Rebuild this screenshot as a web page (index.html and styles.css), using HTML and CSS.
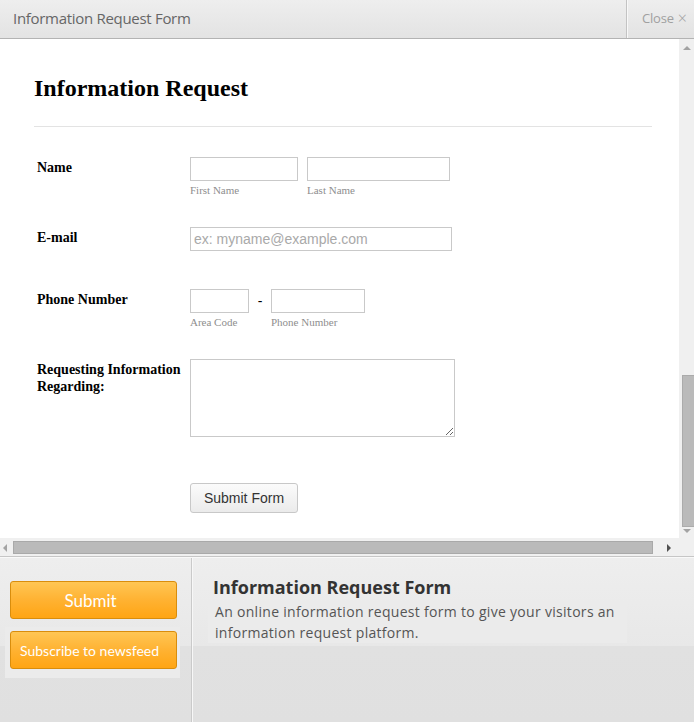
FILE: index.html
```html
<!DOCTYPE html>
<html lang="en">
<head>
<meta charset="utf-8">
<title>Information Request Form</title>
<link rel="stylesheet" href="styles.css">
</head>
<body>
<div class="window">
  <header class="topbar">
    <div class="topbar-title">Information Request Form</div>
    <div class="topbar-close">Close <span class="close-x">×</span></div>
  </header>

  <div class="frame">
    <div class="viewport">
      <div class="content">
        <h1 class="form-heading">Information Request</h1>
        <hr class="divider">
        <form class="form">
          <div class="row">
            <label class="row-label">Name</label>
            <div class="fields">
              <div class="sub">
                <input class="input w-first" type="text">
                <span class="sublabel">First Name</span>
              </div>
              <div class="sub">
                <input class="input w-last" type="text">
                <span class="sublabel">Last Name</span>
              </div>
            </div>
          </div>

          <div class="row row-email">
            <label class="row-label">E-mail</label>
            <div class="fields">
              <input class="input w-email" type="text" placeholder="ex: myname@example.com">
            </div>
          </div>

          <div class="row">
            <label class="row-label">Phone Number</label>
            <div class="fields fields-phone">
              <div class="sub">
                <input class="input w-area" type="text">
                <span class="sublabel">Area Code</span>
              </div>
              <span class="dash">-</span>
              <div class="sub">
                <input class="input w-phone" type="text">
                <span class="sublabel">Phone Number</span>
              </div>
            </div>
          </div>

          <div class="row">
            <label class="row-label">Requesting Information Regarding:</label>
            <div class="fields">
              <textarea class="textarea"></textarea>
            </div>
          </div>

          <div class="row row-submit">
            <span class="row-label"></span>
            <div class="fields">
              <button type="button" class="btn-form">Submit Form</button>
            </div>
          </div>
        </form>
      </div>

      <div class="vscroll">
        <div class="vbox vbox-up"><span class="tri tri-up"></span></div>
        <div class="vtrack"><div class="vthumb"></div></div>
        <div class="vbox vbox-down"><span class="tri tri-down"></span></div>
      </div>
    </div>

    <div class="hscroll">
      <div class="hbox hbox-left"><span class="tri tri-left"></span></div>
      <div class="hthumb"></div>
      <div class="hbox hbox-right"><span class="tri tri-right"></span></div>
    </div>
  </div>

  <footer class="panel">
    <div class="panel-left">
      <button type="button" class="btn-orange btn-submit">Submit</button>
      <div class="subscribe-wrap">
        <button type="button" class="btn-orange btn-subscribe">Subscribe to newsfeed</button>
      </div>
    </div>
    <div class="panel-right">
      <h2 class="panel-title">Information Request Form</h2>
      <p class="panel-desc">An online information request form to give your visitors an information request platform.</p>
    </div>
  </footer>
</div>
</body>
</html>
```

FILE: styles.css
```css
* { box-sizing: border-box; }

html, body {
  margin: 0;
  padding: 0;
  background: #e0e0e0;
}

.window {
  width: 694px;
  height: 722px;
  display: flex;
  flex-direction: column;
  overflow: hidden;
}

/* ---------- Top bar ---------- */
.topbar {
  height: 39px;
  flex: none;
  display: flex;
  align-items: stretch;
  background: linear-gradient(#eeeeee, #e3e3e3);
  border-bottom: 1px solid #b3b3b3;
}

.topbar-title {
  flex: 1;
  display: flex;
  align-items: center;
  padding: 0 0 3px 13px;
  font-family: "Open Sans", "Liberation Sans", sans-serif;
  font-size: 15px;
  color: #666666;
  letter-spacing: -0.3px;
}

.topbar-close {
  width: 68px;
  display: flex;
  align-items: center;
  padding: 0 0 2px 15px;
  border-left: 1px solid #c3c3c3;
  box-shadow: inset 1px 0 0 #f8f8f8;
  font-family: "Open Sans", "Liberation Sans", sans-serif;
  font-size: 13px;
  color: #a0a0a0;
  letter-spacing: -0.2px;
}

.close-x {
  margin-left: 4px;
  font-size: 16px;
  font-weight: 300;
  line-height: 1;
}

/* ---------- Frame ---------- */
.frame {
  flex: none;
  display: flex;
  flex-direction: column;
}

.viewport {
  height: 499px;
  display: flex;
}

.content {
  flex: 1;
  background: #ffffff;
  padding: 35px 0 0 34px;
  font-family: "Liberation Serif", "Times New Roman", serif;
}

.form-heading {
  margin: 0;
  font-size: 24px;
  line-height: 28px;
  font-weight: bold;
  color: #000;
}

.divider {
  margin: 24px 0 0 0;
  width: 618px;
  border: 0;
  border-top: 1px solid #e3e3e3;
  height: 0;
}

.form {
  margin: 30px 0 0 0;
  padding-left: 3px;
  display: flex;
  flex-direction: column;
  gap: 30px;
}

.row {
  display: grid;
  grid-template-columns: 153px auto;
  align-items: start;
}

.row-email { margin-bottom: 8px; }
.row-submit { margin-top: 16px; }

.row-label {
  padding-top: 2px;
  font-size: 14px;
  line-height: 17px;
  font-weight: bold;
  color: #000;
}

.fields {
  display: flex;
  align-items: flex-start;
  gap: 9px;
}

.fields-phone { gap: 0; }

.sub {
  display: flex;
  flex-direction: column;
}

.input {
  height: 24px;
  margin: 0;
  border: 1px solid #c9c9c9;
  padding: 0 3px;
  font-family: "Liberation Sans", Arial, sans-serif;
  font-size: 14px;
  color: #333;
  background: #fff;
  outline: none;
}

.input::placeholder { color: #a9a9a9; }

.w-first { width: 108px; }
.w-last { width: 143px; }
.w-email { width: 262px; }
.w-area { width: 59px; }
.w-phone { width: 94px; }

.sublabel {
  margin-top: 2px;
  font-size: 11px;
  line-height: 14px;
  color: #8e8e8e;
}

.dash {
  width: 22px;
  text-align: center;
  font-family: "Liberation Sans", Arial, sans-serif;
  font-size: 14px;
  line-height: 24px;
  color: #000;
}

.textarea {
  width: 265px;
  height: 78px;
  margin: 0;
  border: 1px solid #c9c9c9;
  padding: 2px;
  font-family: "Liberation Sans", Arial, sans-serif;
  font-size: 13px;
  outline: none;
}

.btn-form {
  width: 108px;
  height: 30px;
  margin: 0;
  padding: 0;
  border: 1px solid #c8c8c8;
  border-radius: 3px;
  background: linear-gradient(#fbfbfb, #ebebeb);
  font-family: "Liberation Sans", Arial, sans-serif;
  font-size: 14px;
  color: #333;
}

/* ---------- Vertical scrollbar ---------- */
.vscroll {
  width: 15px;
  flex: none;
  display: flex;
  flex-direction: column;
  background: #f0f0f0;
}

.vbox {
  flex: none;
  display: flex;
  justify-content: center;
}

.vbox-up { height: 16px; padding-top: 7px; }
.vbox-down { height: 11px; padding-top: 2px; }

.vtrack {
  flex: 1;
  display: flex;
  flex-direction: column;
  justify-content: flex-end;
}

.vthumb {
  height: 152px;
  margin-left: 3px;
  width: 12px;
  background: #bababa;
  border: 1px solid #ababab;
  border-right: 0;
}

.tri {
  display: block;
  width: 0;
  height: 0;
}

.tri-up {
  border-left: 4px solid transparent;
  border-right: 4px solid transparent;
  border-bottom: 4px solid #a3a3a3;
}

.tri-down {
  border-left: 4px solid transparent;
  border-right: 4px solid transparent;
  border-top: 4px solid #a3a3a3;
}

.tri-left {
  border-top: 4px solid transparent;
  border-bottom: 4px solid transparent;
  border-right: 4px solid #a3a3a3;
}

.tri-right {
  border-top: 4px solid transparent;
  border-bottom: 4px solid transparent;
  border-left: 4px solid #505050;
}

/* ---------- Horizontal scrollbar ---------- */
.hscroll {
  height: 19px;
  display: flex;
  align-items: flex-start;
  background: #f0f0f0;
  border-bottom: 1px solid #c6c6c6;
}

.hbox {
  flex: none;
  padding-top: 6px;
}

.hbox-left { width: 13px; padding-left: 3px; }
.hbox-right { margin-left: 14px; }

.hthumb {
  width: 640px;
  height: 13px;
  margin-top: 3px;
  background: #bababa;
  border: 1px solid #a9a9a9;
}

/* ---------- Bottom panel ---------- */
.panel {
  flex: 1;
  display: grid;
  grid-template-columns: 192px 1fr;
  border-top: 1px solid #f9f9f9;
  background: linear-gradient(#eeeeee 0, #e8e8e8 88px, #e1e1e1 88px, #e0e0e0 100%);
}

.panel-left {
  border-right: 1px solid #cacaca;
  padding-top: 23px;
  display: flex;
  flex-direction: column;
}

.btn-orange {
  width: 167px;
  height: 38px;
  margin: 0;
  border: 1px solid #d98d0c;
  border-radius: 3px;
  background: linear-gradient(#ffc654, #ffb232 50%, #ffa514);
  color: #ffffff;
  font-family: Lato, "Open Sans", sans-serif;
}

.btn-submit {
  margin-left: 10px;
  font-size: 17px;
  padding: 0 6px 0 0;
}

.subscribe-wrap {
  margin: 8px 0 0 5px;
  width: 175px;
  padding: 4px 3px 9px 5px;
  background: #ebebeb;
}

.btn-subscribe {
  font-size: 14px;
  text-align: left;
  padding: 0 0 0 9px;
}

.panel-right {
  border-left: 1px solid #f7f7f7;
  padding: 18px 0 0 20px;
  font-family: "Open Sans", "DejaVu Sans", sans-serif;
}

.panel-title {
  margin: 0;
  font-size: 18px;
  line-height: 22px;
  font-weight: bold;
  color: #333333;
}

.panel-desc {
  margin: 3px 0 0 -5px;
  width: 419px;
  padding: 0 7px;
  font-size: 14px;
  line-height: 21px;
  letter-spacing: 0.3px;
  color: #555555;
  background: #ebebeb;
}
```
